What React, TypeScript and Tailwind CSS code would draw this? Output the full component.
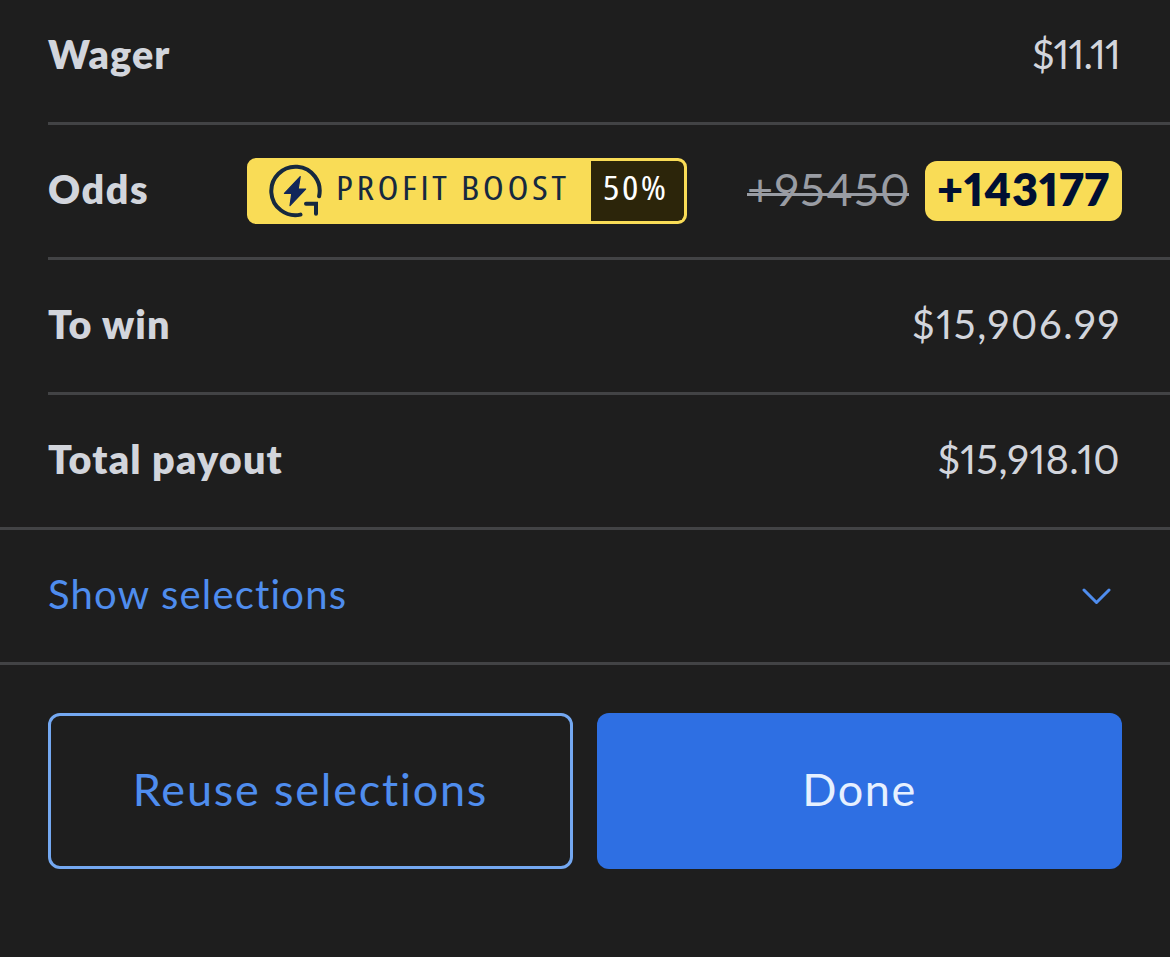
import React from "react";

const rows = {
  line: "border-b-[3px] border-[#424345]",
  label: "pb-[5px] text-[39.5px] leading-[40px] font-extrabold text-[#d2d5dc]",
  value: "pb-[5px] text-[40px] leading-[40px] proportional-nums text-[#d2d5dc]",
};

function Row({ label, labelClass, children }: { label: string; labelClass: string; children: React.ReactNode }) {
  return (
    <div className={`ml-12 flex h-[135px] items-center justify-between pr-12 ${rows.line}`}>
      <div className={`${rows.label} ${labelClass}`}>{label}</div>
      {children}
    </div>
  );
}

function BoostIcon() {
  return (
    <svg width="56" height="56" viewBox="267 163 56 56" fill="none" className="shrink-0">
      <path d="M319.1 196.2A24.2 24.2 0 1 0 300.5 214.6" stroke="#16293f" strokeWidth="4" strokeLinecap="round" />
      <path d="M306 203.8H316V213.8" stroke="#16293f" strokeWidth="4" strokeLinecap="round" strokeLinejoin="miter" />
      <path
        d="M300.2 176.6L284.4 193.4H291.8L290 205.6L305.6 189H298.2Z"
        fill="#11265a"
        stroke="#11265a"
        strokeWidth="1.2"
        strokeLinejoin="round"
      />
    </svg>
  );
}

function BoostBadge() {
  return (
    <div className="flex h-[66px] w-[440px] overflow-hidden rounded-[9px] border-[3px] border-[#f9dc56] bg-[#f9dc56] font-['Open_Sans',sans-serif] text-[33.5px] leading-[40px] whitespace-nowrap [font-stretch:80%]">
      <div className="flex flex-1 items-center pl-[17px] text-[#16293f]">
        <BoostIcon />
        <span className="ml-[13px] origin-left scale-x-[1.15] pb-[8px] tracking-[3.1px]">PROFIT BOOST</span>
      </div>
      <div className="flex w-[93px] items-center rounded-r-[6px] bg-[#2c250a] pl-[12px] text-white">
        <span className="origin-left scale-x-[1.15] pb-[8px] tracking-[2.2px]">50%</span>
      </div>
    </div>
  );
}

export default function App() {
  return (
    <div className="h-[957px] w-[1170px] overflow-hidden bg-[#1e1e1e] font-['Lato',sans-serif] whitespace-nowrap">
      <div className="-mt-[10px]">
        <Row label="Wager" labelClass="tracking-[1.1px]">
          <div className={`${rows.value} pr-[2px] tracking-[-0.9px]`}>$11.11</div>
        </Row>
        <Row label="Odds" labelClass="tracking-[1.6px]">
          <div className="flex items-center">
            <BoostBadge />
            <div className="relative ml-[60px] w-[162px] pb-[5px] text-[45px] leading-[48px] proportional-nums tracking-[1.3px] text-[#999ca3]">
              +95450
              <span className="absolute top-[28px] left-0 h-[3px] w-full bg-[#999ca3]" />
            </div>
            <div className="ml-4 flex h-[60px] w-[197px] items-center justify-center rounded-xl bg-[#f9dc56] text-[45px] leading-[48px] font-extrabold text-[#000f33]">
              <span className="pb-[4px] tracking-[0.9px] proportional-nums">+143177</span>
            </div>
          </div>
        </Row>
        <Row label="To win" labelClass="tracking-[1.1px]">
          <div className={`${rows.value} pr-[1px] tracking-[1.7px]`}>$15,906.99</div>
        </Row>
        <div className={rows.line}>
          <div className="ml-12 flex h-[132px] items-center justify-between pr-12">
            <div className={`${rows.label} tracking-[1.2px]`}>Total payout</div>
            <div className={`${rows.value} pr-[2px] tracking-[0.3px]`}>$15,918.10</div>
          </div>
        </div>
      </div>
      <button className={`flex h-[135px] w-full items-center justify-between pr-[59px] pl-12 text-[40px] leading-[40px] text-[#4f8dee] ${rows.line}`}>
        <span className="pb-[5px] tracking-[1.2px]">Show selections</span>
        <svg width="29" height="18" viewBox="0 0 29 18" fill="none">
          <path d="M2 3L14.5 15.5L27 3" stroke="currentColor" strokeWidth="3" strokeLinecap="round" strokeLinejoin="round" />
        </svg>
      </button>
      <div className="mt-12 grid grid-cols-2 gap-6 px-12 text-[45px] leading-[48px]">
        <button className="h-[156px] rounded-xl border-[3px] border-[#74a8f1] pb-[4px] tracking-[1.8px] text-[#4f8dee]">
          Reuse selections
        </button>
        <button className="h-[156px] rounded-xl bg-[#2e6fe3] pb-[4px] tracking-[1.5px] text-[#e6f0ff]">Done</button>
      </div>
    </div>
  );
}
